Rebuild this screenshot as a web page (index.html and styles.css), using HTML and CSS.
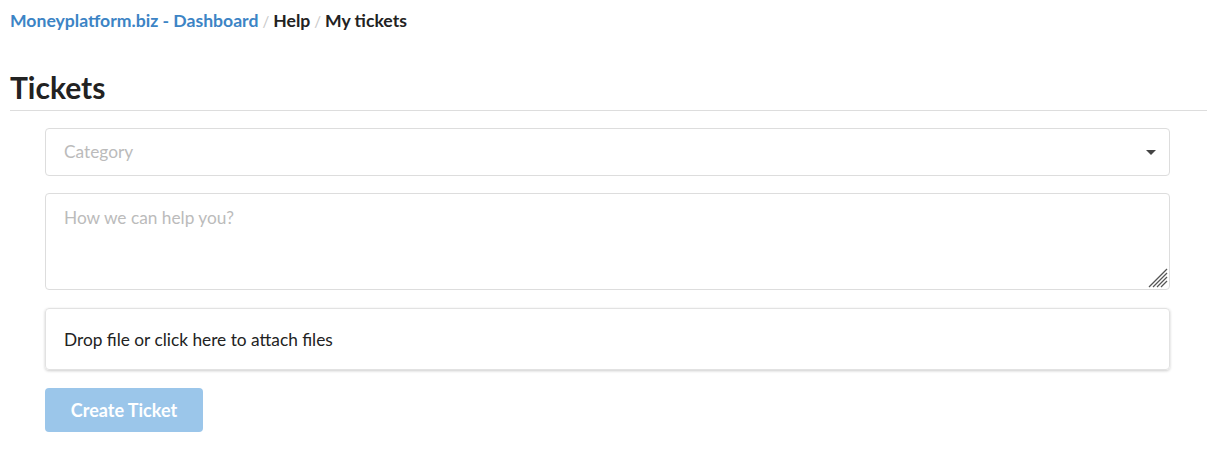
FILE: index.html
```html
<!DOCTYPE html>
<html lang="en">
<head>
    <meta charset="UTF-8">
    <title>My tickets</title>
    <link rel="stylesheet" href="styles.css">
</head>
<body>
    <nav class="breadcrumb">
        <a href="#">Moneyplatform.biz - Dashboard</a>
        <span class="sep">/</span>
        <span>Help</span>
        <span class="sep">/</span>
        <span>My tickets</span>
    </nav>

    <h1 class="page-title">Tickets</h1>

    <form class="ticket-form">
        <div class="select">
            <span class="placeholder">Category</span>
            <span class="caret"></span>
        </div>

        <div class="message-wrap">
            <textarea class="message" placeholder="How we can help you?"></textarea>
            <!-- resize grip -->
            <svg class="grip" width="20" height="20" viewBox="0 0 20 20">
                <g stroke="#555" stroke-width="1.2">
                    <line x1="1" y1="19" x2="19" y2="1"/>
                    <line x1="5" y1="19" x2="19" y2="5"/>
                    <line x1="9" y1="19" x2="19" y2="9"/>
                    <line x1="13" y1="19" x2="19" y2="13"/>
                </g>
            </svg>
        </div>

        <div class="dropzone">Drop file or click here to attach files</div>

        <button type="button" class="btn-create" disabled>Create Ticket</button>
    </form>
</body>
</html>
```

FILE: styles.css
```css
* {
    box-sizing: border-box;
}

body {
    margin: 0;
    padding: 0 0 0 10px;
    font-family: Lato, "Open Sans", sans-serif;
    color: #222;
    background: #fff;
}

/* Breadcrumb */
.breadcrumb {
    padding-top: 10px;
    font-size: 17.6px;
    font-weight: 700;
    line-height: 22px;
    display: flex;
    gap: 4px;
    align-items: baseline;
}

.breadcrumb a {
    color: #3c84c5;
    text-decoration: none;
}

.breadcrumb .sep {
    color: #c8c8c8;
    font-weight: 400;
    font-size: 15px;
}

/* Title */
.page-title {
    margin: 38px 0 0;
    padding-bottom: 6px;
    font-size: 30px;
    font-weight: 700;
    line-height: 34px;
    border-bottom: 1px solid #ddd;
}

/* Form */
.ticket-form {
    margin: 17px 0 0 35px;
    width: 1125px;
    display: flex;
    flex-direction: column;
    align-items: flex-start;
}

.select {
    width: 100%;
    height: 48px;
    border: 1px solid #ddd;
    border-radius: 4px;
    padding: 0 13px 0 18px;
    display: flex;
    align-items: center;
    justify-content: space-between;
    font-size: 17.3px;
}

.placeholder {
    color: #bbb;
    margin-top: -2px;
}

.caret {
    width: 0;
    height: 0;
    border-left: 5px solid transparent;
    border-right: 5px solid transparent;
    border-top: 5px solid #444;
    margin-top: 1px;
}

.message-wrap {
    position: relative;
    margin-top: 17px;
    width: 100%;
}

.message {
    display: block;
    width: 100%;
    height: 97px;
    border: 1px solid #ddd;
    border-radius: 4px;
    padding: 13px 18px;
    font-family: inherit;
    font-size: 17.3px;
    color: #222;
    resize: none;
    outline: none;
}

.message::placeholder {
    color: #bbb;
}

.grip {
    position: absolute;
    right: 2px;
    bottom: 2px;
    pointer-events: none;
}

.dropzone {
    margin-top: 18px;
    width: 100%;
    height: 62px;
    border: 1px solid #e2e2e2;
    border-radius: 4px;
    box-shadow: 0 1px 3px rgba(0, 0, 0, 0.2);
    padding: 0 18px;
    display: flex;
    align-items: center;
    font-size: 17.3px;
    color: #222;
}

.btn-create {
    margin-top: 18px;
    width: 158px;
    height: 44px;
    border: none;
    border-radius: 4px;
    background: #9bc6ea;
    color: #fff;
    font-family: inherit;
    font-size: 18px;
    font-weight: 700;
}
```
